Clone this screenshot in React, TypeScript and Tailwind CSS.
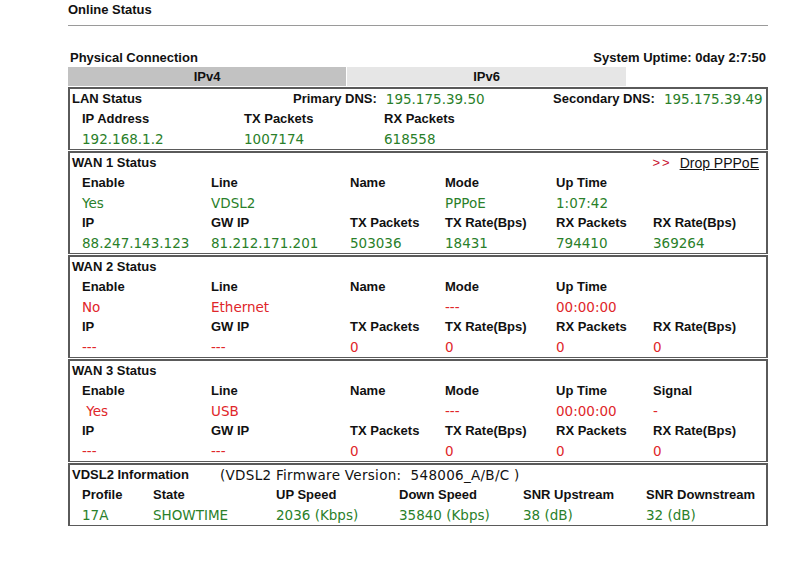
import React from 'react';

const LABEL = "font-['Liberation_Sans',Arial,sans-serif] font-bold text-[13px] leading-5 text-[#111]";
const VALUE = "font-['DejaVu_Sans',Verdana,sans-serif] text-[13.5px] leading-5";
const GREEN = 'text-[#2a7f2a]';
const RED = 'text-[#e0262a]';

const wanCols = ['w-[129px]', 'w-[139px]', 'w-[95px]', 'w-[111px]', 'w-[97px]', 'flex-1'];
const vdslCols = ['w-[71px]', 'w-[123px]', 'w-[123px]', 'w-[124px]', 'w-[123px]', 'flex-1'];

interface RowProps {
  cells: string[];
  cols: string[];
  value?: boolean;
  color?: string;
}

const Row: React.FC<RowProps> = ({ cells, cols, value, color }) => (
  <div className="flex h-5 items-center pl-3 whitespace-nowrap">
    {cells.map((c, i) => (
      <div key={i} className={`${cols[i]} ${value ? `${VALUE} ${color}` : LABEL}`}>
        {c}
      </div>
    ))}
  </div>
);

const Box: React.FC<{ children: React.ReactNode }> = ({ children }) => (
  <div className="border-x-2 border-t-2 border-b border-[#5a5a5a] bg-white">{children}</div>
);

interface WanProps {
  title: string;
  enable: string;
  line: string;
  mode: string;
  upTime: string;
  extraHead?: string;
  extraVal?: string;
  values: string[];
  color: string;
  drop?: boolean;
}

const WanBox: React.FC<WanProps> = ({ title, enable, line, mode, upTime, extraHead, extraVal, values, color, drop }) => (
  <Box>
    <div className="flex h-5 items-center justify-between pl-[2px] pr-[7px]">
      <span className={LABEL}>{title}</span>
      {drop && (
        <span className="flex items-center gap-2 font-['Liberation_Sans',Arial,sans-serif] text-[14px] leading-5">
          <span className="text-[13px] tracking-[2px] text-[#c8102e]">&gt;&gt;</span>
          <span className="text-[#111] underline">Drop PPPoE</span>
        </span>
      )}
    </div>
    <Row cols={wanCols} cells={['Enable', 'Line', 'Name', 'Mode', 'Up Time', extraHead ?? '']} />
    <Row cols={wanCols} value color={color} cells={[enable, line, '', mode, upTime, extraVal ?? '']} />
    <Row cols={wanCols} cells={['IP', 'GW IP', 'TX Packets', 'TX Rate(Bps)', 'RX Packets', 'RX Rate(Bps)']} />
    <Row cols={wanCols} value color={color} cells={values} />
  </Box>
);

export default function App() {
  return (
    <div className="h-[565px] w-[794px] overflow-hidden bg-white">
      <div className="ml-[68px] w-[700px]">
        <div className={`${LABEL} h-5`}>Online Status</div>
        <div className="mt-[5px] border-t border-[#9a9a9a]" />
        <div className="mt-[22px] flex h-[19px] items-center justify-between pl-[2px] pr-[2px]">
          <span className={LABEL}>Physical Connection</span>
          <span className={LABEL}>System Uptime: 0day 2:7:50</span>
        </div>
        <div className="flex h-[19px] gap-px">
          <div className={`${LABEL} w-[278px] bg-[#c2c2c2] text-center leading-[19px]`}>IPv4</div>
          <div className={`${LABEL} w-[279px] bg-[#e6e6e6] text-center leading-[19px]`}>IPv6</div>
        </div>

        <div className="mt-px flex flex-col gap-px">
          <Box>
            <div className="flex h-5 items-center whitespace-nowrap pl-[2px]">
              <div className={`${LABEL} w-[221px]`}>LAN Status</div>
              <div className="flex w-[260px] items-center">
                <span className={LABEL}>Primary DNS:</span>
                <span className={`${VALUE} ${GREEN} ml-[9px]`}>195.175.39.50</span>
              </div>
              <div className="flex items-center">
                <span className={LABEL}>Secondary DNS:</span>
                <span className={`${VALUE} ${GREEN} ml-[9px]`}>195.175.39.49</span>
              </div>
            </div>
            <Row cols={['w-[162px]', 'w-[140px]', 'flex-1']} cells={['IP Address', 'TX Packets', 'RX Packets']} />
            <Row cols={['w-[162px]', 'w-[140px]', 'flex-1']} value color={GREEN} cells={['192.168.1.2', '1007174', '618558']} />
          </Box>

          <WanBox
            title="WAN 1 Status"
            drop
            enable="Yes"
            line="VDSL2"
            mode="PPPoE"
            upTime="1:07:42"
            color={GREEN}
            values={['88.247.143.123', '81.212.171.201', '503036', '18431', '794410', '369264']}
          />
          <WanBox
            title="WAN 2 Status"
            enable="No"
            line="Ethernet"
            mode="---"
            upTime="00:00:00"
            color={RED}
            values={['---', '---', '0', '0', '0', '0']}
          />
          <WanBox
            title="WAN 3 Status"
            enable={'\u00a0Yes'}
            line="USB"
            mode="---"
            upTime="00:00:00"
            extraHead="Signal"
            extraVal="-"
            color={RED}
            values={['---', '---', '0', '0', '0', '0']}
          />

          <Box>
            <div className="flex h-5 items-center whitespace-nowrap pl-[2px]">
              <div className={`${LABEL} w-[148px]`}>VDSL2 Information</div>
              <div className={`${VALUE} text-[#111] tracking-[0.3px]`}>(VDSL2 Firmware Version:&nbsp;&nbsp;548006_A/B/C )</div>
            </div>
            <Row cols={vdslCols} cells={['Profile', 'State', 'UP Speed', 'Down Speed', 'SNR Upstream', 'SNR Downstream']} />
            <Row cols={vdslCols} value color={GREEN} cells={['17A', 'SHOWTIME', '2036 (Kbps)', '35840 (Kbps)', '38 (dB)', '32 (dB)']} />
          </Box>
        </div>
      </div>
    </div>
  );
}
